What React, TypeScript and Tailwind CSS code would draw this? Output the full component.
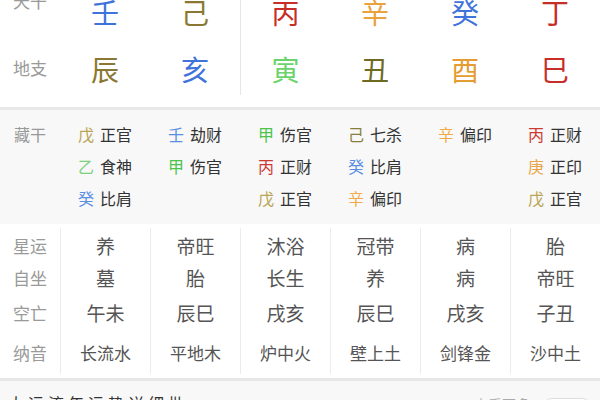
import React from "react";

const cols = ["w-[90px]", "w-[90px]", "w-[90px]", "w-[90px]", "w-[90px]", "w-[90px]"];

const top1 = [
  { c: "壬", cls: "text-[#3f73dc]" },
  { c: "己", cls: "text-[#8a7832]" },
  { c: "丙", cls: "text-[#c62e28]" },
  { c: "辛", cls: "text-[#eaa23c]" },
  { c: "癸", cls: "text-[#3f73dc]" },
  { c: "丁", cls: "text-[#c62e28]" },
];
const top2 = [
  { c: "辰", cls: "text-[#8a7832]" },
  { c: "亥", cls: "text-[#3f73dc]" },
  { c: "寅", cls: "text-[#6bd36b]" },
  { c: "丑", cls: "text-[#6f6a22]" },
  { c: "酉", cls: "text-[#e59c30]" },
  { c: "巳", cls: "text-[#c62e28]" },
];

const hidden: { s: string; cls: string; g: string }[][] = [
  [
    { s: "戊", cls: "text-[#b9a451]", g: "正官" },
    { s: "乙", cls: "text-[#80d080]", g: "食神" },
    { s: "癸", cls: "text-[#5b8ee3]", g: "比肩" },
  ],
  [
    { s: "壬", cls: "text-[#5b8ee3]", g: "劫财" },
    { s: "甲", cls: "text-[#4cc44c]", g: "伤官" },
  ],
  [
    { s: "甲", cls: "text-[#4cc44c]", g: "伤官" },
    { s: "丙", cls: "text-[#cc3a32]", g: "正财" },
    { s: "戊", cls: "text-[#b9a451]", g: "正官" },
  ],
  [
    { s: "己", cls: "text-[#8a7f3a]", g: "七杀" },
    { s: "癸", cls: "text-[#5b8ee3]", g: "比肩" },
    { s: "辛", cls: "text-[#f0aa48]", g: "偏印" },
  ],
  [{ s: "辛", cls: "text-[#f0aa48]", g: "偏印" }],
  [
    { s: "丙", cls: "text-[#cc3a32]", g: "正财" },
    { s: "庚", cls: "text-[#e9a548]", g: "正印" },
    { s: "戊", cls: "text-[#b9a451]", g: "正官" },
  ],
];

const lower = [
  ["养", "墓", "午未", "长流水"],
  ["帝旺", "胎", "辰巳", "平地木"],
  ["沐浴", "长生", "戌亥", "炉中火"],
  ["冠带", "养", "辰巳", "壁上土"],
  ["病", "病", "戌亥", "剑锋金"],
  ["胎", "帝旺", "子丑", "沙中土"],
];
const lowerLabels = ["星运", "自坐", "空亡", "纳音"];
const rowH = ["h-[32px]", "h-[32px]", "h-[38px]", "h-[42px]"];
const rowText = ["text-[19px]", "text-[19px]", "text-[19px]", "text-[17px]"];

export default function App() {
  return (
    <div
      className="w-[600px] h-[400px] overflow-hidden bg-white"
      style={{ fontFamily: '"Noto Sans CJK SC", "Noto Sans", sans-serif' }}
    >
      {/* top pillars */}
      <div className="h-[107px] overflow-hidden bg-white">
        <div className="flex -mt-[20px]">
          <div className="w-[60px] flex flex-col">
            <div className="h-[60px] flex items-center justify-center pt-[2px] -mt-[10px] mb-[10px] text-[17px] text-[#999]">天干</div>
            <div className="h-[60px] flex items-center justify-center pb-[4px] text-[17px] text-[#999]">地支</div>
          </div>
          {cols.map((w, i) => (
            <div
              key={i}
              className={`${w} flex flex-col ${i === 2 ? "border-l border-[#e6e6e6]" : ""} h-[115px]`}
            >
              <div className={`h-[60px] flex items-center justify-center pt-[6px] text-[28px] leading-none ${top1[i].cls}`}>
                {top1[i].c}
              </div>
              <div className={`h-[60px] flex items-center justify-center pt-[6px] text-[28px] leading-none ${top2[i].cls}`}>
                {top2[i].c}
              </div>
            </div>
          ))}
        </div>
      </div>
      <div className="h-[3px] bg-[#e8e8e8]" />

      {/* hidden stems */}
      <div className="bg-[#f8f8f8] flex pt-[8px] pb-[10px]">
        <div className="w-[60px] flex flex-col items-center">
          <div className="h-[32px] flex items-center text-[16px] text-[#999]">藏干</div>
        </div>
        {hidden.map((col, i) => (
          <div key={i} className="w-[90px] flex flex-col items-center">
            {col.map((h, j) => (
              <div key={j} className="h-[32px] flex items-center text-[16px] leading-none">
                <span className={h.cls}>{h.s}</span>
                <span className="ml-[6px] text-[#333]">{h.g}</span>
              </div>
            ))}
          </div>
        ))}
      </div>

      {/* lower table */}
      <div className="bg-white flex pt-[4px] pb-[4px]">
        <div className="w-[60px] flex flex-col pt-[2px]">
          {lowerLabels.map((l, j) => (
            <div key={j} className={`${rowH[j]} flex items-center justify-center text-[17px] text-[#9a9a9a]`}>
              {l}
            </div>
          ))}
        </div>
        {lower.map((col, i) => (
          <div key={i} className="w-[90px] flex flex-col border-l border-[#ececec] pt-[2px]">
            {col.map((t, j) => (
              <div key={j} className={`${rowH[j]} flex items-center justify-center ${rowText[j]} text-[#555]`}>
                {t}
              </div>
            ))}
          </div>
        ))}
      </div>
      <div className="h-[3px] bg-[#e8e8e8]" />

      {/* bottom cut-off area */}
      <div className="bg-[#f8f8f8] h-[40px] flex items-start pt-[14px] px-[8px]">
        <div className="text-[16px] text-[#333] leading-none tracking-[4px]">大运流年运势详细批</div>
        <div className="ml-auto flex items-start gap-[12px]">
          <span className="text-[14px] text-[#aaa] leading-none mt-[2px]">查看更多</span>
          <span className="w-[50px] h-[20px] rounded-[10px] border border-[#ddd] bg-white mt-[3px]" />
        </div>
      </div>
    </div>
  );
}
